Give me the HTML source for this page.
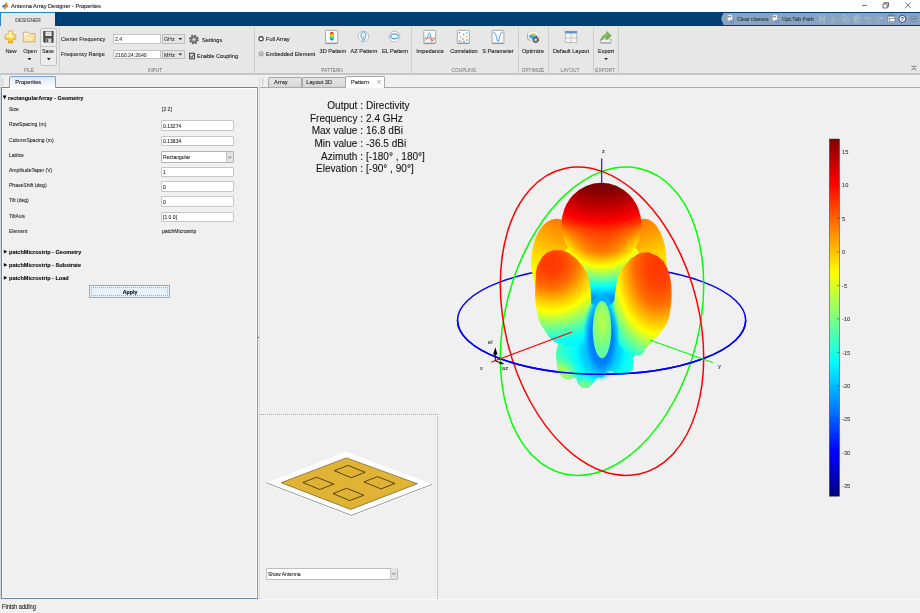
<!DOCTYPE html>
<html lang="en"><head><meta charset="utf-8"><title>Antenna Array Designer - Properties</title>
<style>
*{box-sizing:border-box;margin:0;padding:0}
html,body{width:920px;height:613px;overflow:hidden;background:#f0f0f0}
body{position:relative;font-family:"Liberation Sans",sans-serif;font-size:5.6px;color:#333}
.t{position:absolute;white-space:nowrap;line-height:10px;height:10px;-webkit-text-stroke:0.08px currentColor}
.t.g{will-change:transform}
.t.c{text-align:center}
.t.r{text-align:right}
.b{position:absolute}
svg{position:absolute;left:0;top:0;overflow:visible}
#app{position:absolute;left:0;top:0;width:920px;height:613px;overflow:hidden;background:#f0f0f0;will-change:transform;}
</style></head>
<body>
<div id="app">
<div class="b" style="left:0px;top:0px;width:920px;height:12px;background:#fff"></div>
<div class="t " style="left:11.1px;top:1px;font-size:6.22px;color:#111;transform:scaleX(0.9);transform-origin:0 50%;">Antenna Array Designer - Properties</div>
<div class="b" style="left:0px;top:11.7px;width:920px;height:14.3px;background:#003f73"></div>
<div class="b" style="left:0px;top:11.7px;width:54.6px;height:14.3px;background:#e7e7e7;border-top:1.3px solid #2a86c8;border-left:1px solid #2a86c8"></div>
<div class="t c" style="left:-72.40px;width:200px;top:15px;font-size:5.39px;color:#444;transform:scaleX(0.9);transform-origin:50% 50%;">DESIGNER</div>
<div class="b" style="left:721px;top:12.7px;width:199px;height:12.2px;background:#88a4c2;clip-path:polygon(2.6px 0,100% 0,100% 100%,2.6px 100%,0 50%)"></div>
<div class="t " style="left:736.5px;top:14px;font-size:5.89px;color:#24364a;transform:scaleX(0.9);transform-origin:0 50%;">Clear classes</div>
<div class="t " style="left:781.8px;top:14px;font-size:6.06px;color:#24364a;transform:scaleX(0.9);transform-origin:0 50%;">Opt.Tab Path</div>
<div class="b" style="left:0px;top:26px;width:920px;height:48px;background:#e7e7e7"></div>
<div class="b" style="left:0px;top:73.4px;width:920px;height:1.4px;background:#c6c6c6"></div>
<div class="b" style="left:0px;top:75px;width:0.8px;height:524px;background:#d3dbe5"></div>
<div class="b" style="left:59px;top:27px;width:0.6px;height:46px;background:#cfcfcf"></div>
<div class="b" style="left:253.5px;top:27px;width:0.6px;height:46px;background:#cfcfcf"></div>
<div class="b" style="left:411px;top:27px;width:0.6px;height:46px;background:#cfcfcf"></div>
<div class="b" style="left:517.5px;top:27px;width:0.6px;height:46px;background:#cfcfcf"></div>
<div class="b" style="left:548px;top:27px;width:0.6px;height:46px;background:#cfcfcf"></div>
<div class="b" style="left:593px;top:27px;width:0.6px;height:46px;background:#cfcfcf"></div>
<div class="b" style="left:617.5px;top:27px;width:0.6px;height:46px;background:#cfcfcf"></div>
<div class="t c" style="left:-71.50px;width:200px;top:65px;font-size:5.33px;color:#707070;-webkit-text-stroke:0;transform:scaleX(0.9);transform-origin:50% 50%;">FILE</div>
<div class="t c" style="left:55.00px;width:200px;top:65px;font-size:5.33px;color:#707070;-webkit-text-stroke:0;transform:scaleX(0.9);transform-origin:50% 50%;">INPUT</div>
<div class="t c" style="left:231.50px;width:200px;top:65px;font-size:5.33px;color:#707070;-webkit-text-stroke:0;transform:scaleX(0.9);transform-origin:50% 50%;">PATTERN</div>
<div class="t c" style="left:364.00px;width:200px;top:65px;font-size:5.33px;color:#707070;-webkit-text-stroke:0;transform:scaleX(0.9);transform-origin:50% 50%;">COUPLING</div>
<div class="t c" style="left:432.50px;width:200px;top:65px;font-size:5.33px;color:#707070;-webkit-text-stroke:0;transform:scaleX(0.9);transform-origin:50% 50%;">OPTIMIZE</div>
<div class="t c" style="left:470.00px;width:200px;top:65px;font-size:5.33px;color:#707070;-webkit-text-stroke:0;transform:scaleX(0.9);transform-origin:50% 50%;">LAYOUT</div>
<div class="t c" style="left:505.00px;width:200px;top:65px;font-size:5.33px;color:#707070;-webkit-text-stroke:0;transform:scaleX(0.9);transform-origin:50% 50%;">EXPORT</div>
<div class="t c" style="left:-89.50px;width:200px;top:46px;font-size:6.22px;color:#111;transform:scaleX(0.9);transform-origin:50% 50%;">New</div>
<div class="t c" style="left:-70.50px;width:200px;top:46px;font-size:6.22px;color:#111;transform:scaleX(0.9);transform-origin:50% 50%;">Open</div>
<div class="b" style="left:40px;top:27.5px;width:17px;height:38px;border:1px solid #c2c2c2;border-radius:2px;background:#ececec"></div>
<div class="b" style="left:40.5px;top:46px;width:16px;height:0.6px;background:#c8c8c8"></div>
<div class="t c" style="left:-51.75px;width:200px;top:46px;font-size:5.89px;color:#111;transform:scaleX(0.9);transform-origin:50% 50%;">Save</div>
<div class="t " style="left:61.2px;top:34px;font-size:6.17px;color:#222;transform:scaleX(0.9);transform-origin:0 50%;">Center Frequency</div>
<div class="t " style="left:61.2px;top:49px;font-size:6.11px;color:#222;transform:scaleX(0.9);transform-origin:0 50%;">Frequency Range</div>
<div class="b" style="left:113px;top:34.2px;width:47.5px;height:9.6px;background:#fff;border:1px solid #c4c4c4"></div>
<div class="b" style="left:162px;top:34.2px;width:23px;height:9.6px;background:#e4e4e4;border:1px solid #bcbcbc"></div>
<div class="b" style="left:113px;top:49.7px;width:47.5px;height:9.6px;background:#fff;border:1px solid #c4c4c4"></div>
<div class="b" style="left:162px;top:49.7px;width:23px;height:9.6px;background:#e4e4e4;border:1px solid #bcbcbc"></div>
<div class="t " style="left:114.5px;top:34px;font-size:5.78px;color:#333;transform:scaleX(0.9);transform-origin:0 50%;">2.4</div>
<div class="t " style="left:114.5px;top:50px;font-size:5.78px;color:#333;transform:scaleX(0.9);transform-origin:0 50%;">2160:24:2640</div>
<div class="t " style="left:164px;top:34px;font-size:5.89px;color:#333;transform:scaleX(0.9);transform-origin:0 50%;">GHz</div>
<div class="t " style="left:164px;top:50px;font-size:5.89px;color:#333;transform:scaleX(0.9);transform-origin:0 50%;">MHz</div>
<div class="t " style="left:202px;top:35px;font-size:6.22px;color:#111;transform:scaleX(0.9);transform-origin:0 50%;">Settings</div>
<div class="t " style="left:197px;top:51px;font-size:6.22px;color:#111;transform:scaleX(0.9);transform-origin:0 50%;">Enable Coupling</div>
<div class="t " style="left:266px;top:34px;font-size:6.22px;color:#111;transform:scaleX(0.9);transform-origin:0 50%;">Full Array</div>
<div class="t " style="left:266px;top:49px;font-size:6.22px;color:#111;transform:scaleX(0.9);transform-origin:0 50%;">Embedded Element</div>
<div class="t c" style="left:232.50px;width:200px;top:46px;font-size:6.22px;color:#111;transform:scaleX(0.9);transform-origin:50% 50%;">3D Pattern</div>
<div class="t c" style="left:263.50px;width:200px;top:46px;font-size:6.22px;color:#111;transform:scaleX(0.9);transform-origin:50% 50%;">AZ Pattern</div>
<div class="t c" style="left:295.00px;width:200px;top:46px;font-size:6.22px;color:#111;transform:scaleX(0.9);transform-origin:50% 50%;">EL Pattern</div>
<div class="t c" style="left:330.00px;width:200px;top:46px;font-size:6.22px;color:#111;transform:scaleX(0.9);transform-origin:50% 50%;">Impedance</div>
<div class="t c" style="left:363.50px;width:200px;top:46px;font-size:6.22px;color:#111;transform:scaleX(0.9);transform-origin:50% 50%;">Correlation</div>
<div class="t c" style="left:398.00px;width:200px;top:46px;font-size:6.22px;color:#111;transform:scaleX(0.9);transform-origin:50% 50%;">S Parameter</div>
<div class="t c" style="left:433.00px;width:200px;top:46px;font-size:6.22px;color:#111;transform:scaleX(0.9);transform-origin:50% 50%;">Optimize</div>
<div class="t c" style="left:471.00px;width:200px;top:46px;font-size:6.22px;color:#111;transform:scaleX(0.9);transform-origin:50% 50%;">Default Layout</div>
<div class="t c" style="left:505.50px;width:200px;top:46px;font-size:6.22px;color:#111;transform:scaleX(0.9);transform-origin:50% 50%;">Export</div>
<div class="b" style="left:0.9px;top:87.1px;width:257px;height:511.9px;border:1.2px solid #6487ae;border-right:1.8px solid #7b9cc0;background:#f0f0f0;box-shadow:inset 0 0 0 0.9px #fdfdfd"></div>
<div class="b" style="left:9.2px;top:76.3px;width:46.8px;height:11.9px;border:0.9px solid #7da0c8;border-bottom:none;border-radius:2px 2px 0 0;background:linear-gradient(#dbe5f1,#f4f8fc 60%,#fff)"></div>
<div class="b" style="left:2.4px;top:77.7px;width:0.6px;height:8px;background:#d4d4d4"></div>
<div class="b" style="left:3.4px;top:77.7px;width:0.5px;height:8px;background:#e4e4e4"></div>
<div class="t c" style="left:-71.80px;width:200px;top:77px;font-size:5.70px;color:#111;">Properties</div>
<div class="b" style="left:259.2px;top:76px;width:0.7px;height:523px;background:#dcdcdc"></div>
<div class="b" style="left:259.2px;top:598.9px;width:661px;height:0.7px;background:#fafafa"></div>
<div class="b" style="left:259.5px;top:86.9px;width:660.5px;height:0.8px;background:#a9a9a9"></div>
<div class="b" style="left:262.2px;top:77.7px;width:0.6px;height:8px;background:#cfcfcf"></div>
<div class="b" style="left:263.3px;top:77.7px;width:0.5px;height:8px;background:#e2e2e2"></div>
<div class="b" style="left:268px;top:76.8px;width:34.4px;height:10.2px;border:0.8px solid #a6a6a6;border-bottom:none;border-radius:2px 2px 0 0;background:linear-gradient(#e6e6e6,#d6d6d6)"></div>
<div class="b" style="left:302.2px;top:76.8px;width:43.4px;height:10.2px;border:0.8px solid #a6a6a6;border-bottom:none;border-radius:2px 2px 0 0;background:linear-gradient(#e6e6e6,#d6d6d6)"></div>
<div class="b" style="left:345.4px;top:76.4px;width:39.2px;height:11.4px;border:0.8px solid #a6a6a6;border-bottom:none;border-radius:2px 2px 0 0;background:#fff"></div>
<div class="t " style="left:274.1px;top:77px;font-size:5.70px;color:#222;">Array</div>
<div class="t " style="left:306.3px;top:77px;font-size:5.65px;color:#222;">Layout 3D</div>
<div class="t " style="left:351.1px;top:77px;font-size:5.55px;color:#111;">Pattern</div>
<div class="b" style="left:258.2px;top:337px;width:1px;height:1px;background:#111;border-radius:50%"></div>
<div class="t " style="left:8.1px;top:93px;font-size:6.17px;color:#000;font-weight:bold;transform:scaleX(0.9);transform-origin:0 50%;">rectangularArray - Geometry</div>
<div class="t " style="left:9.1px;top:104px;font-size:5.61px;color:#222;transform:scaleX(0.9);transform-origin:0 50%;">Size</div>
<div class="t " style="left:9.1px;top:119px;font-size:5.61px;color:#222;transform:scaleX(0.9);transform-origin:0 50%;">RowSpacing (m)</div>
<div class="t " style="left:9.1px;top:135px;font-size:5.61px;color:#222;transform:scaleX(0.9);transform-origin:0 50%;">ColumnSpacing (m)</div>
<div class="t " style="left:9.1px;top:150px;font-size:5.61px;color:#222;transform:scaleX(0.9);transform-origin:0 50%;">Lattice</div>
<div class="t " style="left:9.1px;top:165px;font-size:5.61px;color:#222;transform:scaleX(0.9);transform-origin:0 50%;">AmplitudeTaper (V)</div>
<div class="t " style="left:9.1px;top:180px;font-size:5.61px;color:#222;transform:scaleX(0.9);transform-origin:0 50%;">PhaseShift (deg)</div>
<div class="t " style="left:9.1px;top:195px;font-size:5.61px;color:#222;transform:scaleX(0.9);transform-origin:0 50%;">Tilt (deg)</div>
<div class="t " style="left:9.1px;top:211px;font-size:5.61px;color:#222;transform:scaleX(0.9);transform-origin:0 50%;">TiltAxis</div>
<div class="t " style="left:9.1px;top:226px;font-size:5.61px;color:#222;transform:scaleX(0.9);transform-origin:0 50%;">Element</div>
<div class="t " style="left:162px;top:104px;font-size:5.61px;color:#222;transform:scaleX(0.9);transform-origin:0 50%;">[2 2]</div>
<div class="t " style="left:162px;top:226px;font-size:5.61px;color:#222;transform:scaleX(0.9);transform-origin:0 50%;">patchMicrostrip</div>
<div class="b" style="left:161px;top:120.15px;width:72.6px;height:10.6px;background:#fff;border:0.8px solid #c6c6c6;border-radius:1px"></div>
<div class="t " style="left:162.6px;top:121px;font-size:5.61px;color:#222;transform:scaleX(0.9);transform-origin:0 50%;">0.13274</div>
<div class="b" style="left:161px;top:135.75px;width:72.6px;height:10.6px;background:#fff;border:0.8px solid #c6c6c6;border-radius:1px"></div>
<div class="t " style="left:162.6px;top:136px;font-size:5.61px;color:#222;transform:scaleX(0.9);transform-origin:0 50%;">0.13834</div>
<div class="b" style="left:161px;top:166.54999999999998px;width:72.6px;height:10.6px;background:#fff;border:0.8px solid #c6c6c6;border-radius:1px"></div>
<div class="t " style="left:162.6px;top:167px;font-size:5.61px;color:#222;transform:scaleX(0.9);transform-origin:0 50%;">1</div>
<div class="b" style="left:161px;top:181.25px;width:72.6px;height:10.6px;background:#fff;border:0.8px solid #c6c6c6;border-radius:1px"></div>
<div class="t " style="left:162.6px;top:182px;font-size:5.61px;color:#222;transform:scaleX(0.9);transform-origin:0 50%;">0</div>
<div class="b" style="left:161px;top:196.25px;width:72.6px;height:10.6px;background:#fff;border:0.8px solid #c6c6c6;border-radius:1px"></div>
<div class="t " style="left:162.6px;top:197px;font-size:5.61px;color:#222;transform:scaleX(0.9);transform-origin:0 50%;">0</div>
<div class="b" style="left:161px;top:211.7px;width:72.6px;height:10.6px;background:#fff;border:0.8px solid #c6c6c6;border-radius:1px"></div>
<div class="t " style="left:162.6px;top:212px;font-size:5.61px;color:#222;transform:scaleX(0.9);transform-origin:0 50%;">[1 0 0]</div>
<div class="b" style="left:161px;top:151.4px;width:72.6px;height:11.4px;background:#fff;border:0.8px solid #b4b4b4;border-radius:1px"></div>
<div class="b" style="left:226px;top:152.1px;width:7px;height:10px;background:#e3e3e3;border-left:0.6px solid #c4c4c4"></div>
<div class="t " style="left:163px;top:152px;font-size:5.61px;color:#222;transform:scaleX(0.9);transform-origin:0 50%;">Rectangular</div>
<div class="t " style="left:9.2px;top:247px;font-size:6.17px;color:#000;font-weight:bold;transform:scaleX(0.9);transform-origin:0 50%;">patchMicrostrip - Geometry</div>
<div class="t " style="left:9.2px;top:260px;font-size:6.17px;color:#000;font-weight:bold;transform:scaleX(0.9);transform-origin:0 50%;">patchMicrostrip - Substrate</div>
<div class="t " style="left:9.2px;top:273px;font-size:6.17px;color:#000;font-weight:bold;transform:scaleX(0.9);transform-origin:0 50%;">patchMicrostrip - Load</div>
<div class="b" style="left:89.2px;top:285.4px;width:80.8px;height:12.2px;border:1.2px solid #7fb2e0;background:#e5f1fb"></div>
<div class="b" style="left:91.2px;top:287.3px;width:76.8px;height:8.4px;border:0.5px dotted #aaa"></div>
<div class="t c" style="left:29.50px;width:200px;top:287px;font-size:5.89px;color:#000;font-weight:bold;transform:scaleX(0.9);transform-origin:50% 50%;">Apply</div>
<div class="t r g" style="left:163.10px;width:200px;top:101px;font-size:10.05px;color:#111;">Output :</div>
<div class="t g" style="left:366.1px;top:101px;font-size:10.05px;color:#111;">Directivity</div>
<div class="t r g" style="left:163.10px;width:200px;top:114px;font-size:10.05px;color:#111;">Frequency :</div>
<div class="t g" style="left:366.1px;top:114px;font-size:10.05px;color:#111;">2.4 GHz</div>
<div class="t r g" style="left:163.10px;width:200px;top:126px;font-size:10.05px;color:#111;">Max value :</div>
<div class="t g" style="left:366.1px;top:126px;font-size:10.05px;color:#111;">16.8 dBi</div>
<div class="t r g" style="left:163.10px;width:200px;top:139px;font-size:10.05px;color:#111;">Min value :</div>
<div class="t g" style="left:366.1px;top:139px;font-size:10.05px;color:#111;">-36.5 dBi</div>
<div class="t r g" style="left:163.10px;width:200px;top:152px;font-size:10.05px;color:#111;">Azimuth :</div>
<div class="t g" style="left:366.1px;top:152px;font-size:10.05px;color:#111;">[-180° , 180°]</div>
<div class="t r g" style="left:163.10px;width:200px;top:164px;font-size:10.05px;color:#111;">Elevation :</div>
<div class="t g" style="left:366.1px;top:164px;font-size:10.05px;color:#111;">[-90° , 90°]</div>
<div class="t g" style="left:601.9px;top:146px;font-size:5.70px;color:#333;">z</div>
<div class="t g" style="left:480px;top:363px;font-size:5.70px;color:#333;">x</div>
<div class="t g" style="left:717.8px;top:361px;font-size:5.70px;color:#333;">y</div>
<div class="t g" style="left:488.3px;top:337px;font-size:5.70px;color:#333;">el</div>
<div class="t g" style="left:502px;top:363px;font-size:5.70px;color:#333;">az</div>
<div class="b" style="left:260px;top:413.8px;width:178.2px;height:185px;border-top:0.8px dotted #a8a8a8;border-right:0.8px dotted #a8a8a8"></div>
<div class="b" style="left:266.4px;top:567.6px;width:131.3px;height:12.1px;background:#fff;border:0.8px solid #bdbdbd;border-radius:1px"></div>
<div class="b" style="left:390.2px;top:568.3px;width:6.8px;height:10.7px;background:#e3e3e3;border-left:0.6px solid #c4c4c4"></div>
<div class="t " style="left:267.8px;top:569px;font-size:5.61px;color:#222;transform:scaleX(0.9);transform-origin:0 50%;">Show Antenna</div>
<div class="t " style="left:1.8px;top:602px;font-size:6.33px;color:#111;transform:scaleX(0.9);transform-origin:0 50%;">Finish adding</div>
<div class="t g" style="left:842.2px;top:147px;font-size:5.70px;color:#3a3a3a;">15</div>
<div class="t g" style="left:842.2px;top:180px;font-size:5.70px;color:#3a3a3a;">10</div>
<div class="t g" style="left:842.2px;top:214px;font-size:5.70px;color:#3a3a3a;">5</div>
<div class="t g" style="left:842.2px;top:247px;font-size:5.70px;color:#3a3a3a;">0</div>
<div class="t g" style="left:842.2px;top:281px;font-size:5.70px;color:#3a3a3a;">-5</div>
<div class="t g" style="left:842.2px;top:314px;font-size:5.70px;color:#3a3a3a;">-10</div>
<div class="t g" style="left:842.2px;top:348px;font-size:5.70px;color:#3a3a3a;">-15</div>
<div class="t g" style="left:842.2px;top:381px;font-size:5.70px;color:#3a3a3a;">-20</div>
<div class="t g" style="left:842.2px;top:414px;font-size:5.70px;color:#3a3a3a;">-25</div>
<div class="t g" style="left:842.2px;top:448px;font-size:5.70px;color:#3a3a3a;">-30</div>
<div class="t g" style="left:842.2px;top:481px;font-size:5.70px;color:#3a3a3a;">-35</div>
<svg width="920" height="613" viewBox="0 0 920 613">
<g fill="none" stroke-width="1.5">
<ellipse cx="601.6" cy="320.3" rx="144.1" ry="54" stroke="#0000ff"/>
<circle r="1" transform="matrix(-101.7 36.6 0 -149.8 602.0 321.2)" stroke="#00ff00" vector-effect="non-scaling-stroke"/>
<circle r="1" transform="matrix(101.7 36.6 0 -149.8 602.0 321.2)" stroke="#ff0000" vector-effect="non-scaling-stroke"/>
</g>
<defs><radialGradient id="gBody" gradientUnits="userSpaceOnUse" cx="0" cy="0" r="60" gradientTransform="translate(601 352) rotate(0) scale(0.8 1)"><stop offset="0.000" stop-color="#008aff"/><stop offset="0.267" stop-color="#00a8ff"/><stop offset="0.500" stop-color="#00faff"/><stop offset="0.750" stop-color="#24ffdb"/><stop offset="1.000" stop-color="#57ffa8"/></radialGradient><radialGradient id="gP1" gradientUnits="userSpaceOnUse" cx="0" cy="0" r="22" gradientTransform="translate(559 376) rotate(0) scale(1 1)"><stop offset="0.000" stop-color="#b3ff4c"/><stop offset="0.455" stop-color="#94ff6b"/><stop offset="1.000" stop-color="#4dffb2" stop-opacity="0"/></radialGradient><radialGradient id="gP2" gradientUnits="userSpaceOnUse" cx="0" cy="0" r="16" gradientTransform="translate(584 390) rotate(0) scale(1 1)"><stop offset="0.000" stop-color="#80ff80"/><stop offset="0.500" stop-color="#61ff9e"/><stop offset="1.000" stop-color="#2effd1" stop-opacity="0"/></radialGradient><clipPath id="cBody"><path d="M585.0 290.0C567.0 301.7 575.1 306.7 566.0 325.0C556.9 343.3 560.9 332.7 557.8 345.0C554.7 357.3 556.1 352.3 556.8 362.0C557.5 371.7 556.5 368.3 560.0 374.0C563.5 379.7 562.4 377.7 567.4 379.0C572.4 380.3 571.3 376.3 575.0 378.0C578.7 379.7 575.2 380.7 578.5 384.0C581.8 387.3 580.5 387.8 585.0 388.0C589.5 388.2 587.9 387.8 592.0 384.5C596.1 381.2 593.9 380.3 597.4 378.0C600.9 375.7 599.1 379.8 602.6 377.5C606.1 375.2 602.7 372.3 607.8 371.0C612.9 369.7 610.6 373.2 618.0 373.5C625.4 373.8 624.8 375.2 630.0 372.0C635.2 368.8 632.0 369.3 633.5 364.0C635.0 358.7 630.3 362.0 634.5 356.0C638.7 350.0 643.5 358.0 646.0 346.0C648.5 334.0 650.7 338.7 642.0 320.0C633.3 301.3 639.0 300.0 620.0 290.0C601.0 280.0 603.0 278.3 585.0 290.0Z"/></clipPath><radialGradient id="gBL" gradientUnits="userSpaceOnUse" cx="0" cy="0" r="110" gradientTransform="translate(578 180) rotate(0) scale(1 1)"><stop offset="0.000" stop-color="#ff4c00"/><stop offset="0.364" stop-color="#ff7000"/><stop offset="0.545" stop-color="#ff9e00"/><stop offset="0.727" stop-color="#ffd100"/><stop offset="0.909" stop-color="#fffa00"/><stop offset="1.000" stop-color="#f0ff0f"/></radialGradient><radialGradient id="gBR" gradientUnits="userSpaceOnUse" cx="0" cy="0" r="110" gradientTransform="translate(625 180) rotate(0) scale(1 1)"><stop offset="0.000" stop-color="#ff4c00"/><stop offset="0.364" stop-color="#ff7000"/><stop offset="0.545" stop-color="#ff9e00"/><stop offset="0.727" stop-color="#ffd100"/><stop offset="0.909" stop-color="#fffa00"/><stop offset="1.000" stop-color="#f0ff0f"/></radialGradient><radialGradient id="gMain" gradientUnits="userSpaceOnUse" cx="0" cy="0" r="170" gradientTransform="translate(601.5 140) rotate(0) scale(1 1)"><stop offset="0.000" stop-color="#800000"/><stop offset="0.294" stop-color="#800000"/><stop offset="0.376" stop-color="#b30000"/><stop offset="0.482" stop-color="#ff0000"/><stop offset="0.594" stop-color="#ff8000"/><stop offset="0.694" stop-color="#ffff00"/><stop offset="0.794" stop-color="#80ff80"/><stop offset="0.859" stop-color="#00ffff"/><stop offset="0.929" stop-color="#0094ff"/><stop offset="1.000" stop-color="#0080ff"/></radialGradient><radialGradient id="gLow" gradientUnits="userSpaceOnUse" cx="0" cy="0" r="90" gradientTransform="translate(601.4 222) rotate(0) scale(1 1)"><stop offset="0.000" stop-color="#ff0000"/><stop offset="0.222" stop-color="#ff4200"/><stop offset="0.356" stop-color="#ff8a00"/><stop offset="0.489" stop-color="#ffff00"/><stop offset="0.611" stop-color="#80ff80"/><stop offset="0.722" stop-color="#00ffff"/><stop offset="0.844" stop-color="#0094ff"/><stop offset="1.000" stop-color="#0080ff"/></radialGradient><linearGradient id="lgFade" gradientUnits="userSpaceOnUse" x1="0" y1="224" x2="0" y2="250"><stop offset="0" stop-color="#000"/><stop offset="1" stop-color="#fff"/></linearGradient><mask id="mLow" maskUnits="userSpaceOnUse" x="540" y="220" width="124" height="95"><rect x="540" y="220" width="124" height="95" fill="url(#lgFade)"/></mask><radialGradient id="gFL" gradientUnits="userSpaceOnUse" cx="0" cy="0" r="90" gradientTransform="translate(551 263) rotate(0) scale(1 1)"><stop offset="0.000" stop-color="#ff3800"/><stop offset="0.133" stop-color="#ff4200"/><stop offset="0.278" stop-color="#ff7000"/><stop offset="0.411" stop-color="#ffbd00"/><stop offset="0.533" stop-color="#ffff00"/><stop offset="0.700" stop-color="#80ff80"/><stop offset="0.867" stop-color="#0afff5"/><stop offset="1.000" stop-color="#00f0ff"/></radialGradient><radialGradient id="gFR" gradientUnits="userSpaceOnUse" cx="0" cy="0" r="64" gradientTransform="translate(658 267) rotate(0) scale(1 1.6)"><stop offset="0.000" stop-color="#ff3800"/><stop offset="0.188" stop-color="#ff4200"/><stop offset="0.375" stop-color="#ff7000"/><stop offset="0.531" stop-color="#ffbd00"/><stop offset="0.656" stop-color="#ffff00"/><stop offset="0.812" stop-color="#80ff80"/><stop offset="0.953" stop-color="#1affe5"/><stop offset="1.000" stop-color="#05fffa"/></radialGradient><radialGradient id="gHalo" gradientUnits="userSpaceOnUse" cx="0" cy="0" r="1" gradientTransform="translate(0 0) rotate(0) scale(1 1)"><stop offset="0.000" stop-color="#0075ff"/><stop offset="0.600" stop-color="#0080ff"/><stop offset="0.820" stop-color="#00bdff" stop-opacity="0.8"/><stop offset="1.000" stop-color="#00faff" stop-opacity="0"/></radialGradient><radialGradient id="gC" gradientUnits="userSpaceOnUse" cx="0" cy="0" r="30" gradientTransform="translate(602 322) rotate(0) scale(0.4 1)"><stop offset="0.000" stop-color="#bdff42"/><stop offset="0.400" stop-color="#9eff61"/><stop offset="1.000" stop-color="#61ff9e"/></radialGradient></defs>
<g id="pattern3d"><path d="M585.0 290.0C567.0 301.7 575.1 306.7 566.0 325.0C556.9 343.3 560.9 332.7 557.8 345.0C554.7 357.3 556.1 352.3 556.8 362.0C557.5 371.7 556.5 368.3 560.0 374.0C563.5 379.7 562.4 377.7 567.4 379.0C572.4 380.3 571.3 376.3 575.0 378.0C578.7 379.7 575.2 380.7 578.5 384.0C581.8 387.3 580.5 387.8 585.0 388.0C589.5 388.2 587.9 387.8 592.0 384.5C596.1 381.2 593.9 380.3 597.4 378.0C600.9 375.7 599.1 379.8 602.6 377.5C606.1 375.2 602.7 372.3 607.8 371.0C612.9 369.7 610.6 373.2 618.0 373.5C625.4 373.8 624.8 375.2 630.0 372.0C635.2 368.8 632.0 369.3 633.5 364.0C635.0 358.7 630.3 362.0 634.5 356.0C638.7 350.0 643.5 358.0 646.0 346.0C648.5 334.0 650.7 338.7 642.0 320.0C633.3 301.3 639.0 300.0 620.0 290.0C601.0 280.0 603.0 278.3 585.0 290.0Z" fill="url(#gBody)"/>
<g clip-path="url(#cBody)"><circle cx="559" cy="376" r="22" fill="url(#gP1)"/><circle cx="584" cy="390" r="16" fill="url(#gP2)"/></g>
<ellipse cx="556.5" cy="262" rx="25.3" ry="43.3" fill="url(#gBL)"/>
<ellipse cx="644.3" cy="262" rx="22.2" ry="43.3" fill="url(#gBR)"/>
<path d="M566.0 250.0C557.2 261.7 569.0 258.3 575.0 270.0C581.0 281.7 579.3 275.0 584.0 285.0C588.7 295.0 583.2 293.0 589.0 300.0C594.8 307.0 592.8 306.0 601.5 306.0C610.2 306.0 608.8 307.0 615.0 300.0C621.2 293.0 615.7 295.0 620.0 285.0C624.3 275.0 622.3 281.7 628.0 270.0C633.7 258.3 645.8 261.7 637.0 250.0C628.2 238.3 625.2 235.0 601.5 235.0C577.8 235.0 574.8 238.3 566.0 250.0Z" fill="url(#gMain)"/>
<ellipse cx="601.4" cy="224.7" rx="40" ry="42" fill="url(#gMain)"/>
<g mask="url(#mLow)"><ellipse cx="601.4" cy="224.7" rx="40" ry="42" fill="url(#gLow)"/><path d="M566.0 250.0C557.2 261.7 569.0 258.3 575.0 270.0C581.0 281.7 579.3 275.0 584.0 285.0C588.7 295.0 583.2 293.0 589.0 300.0C594.8 307.0 592.8 306.0 601.5 306.0C610.2 306.0 608.8 307.0 615.0 300.0C621.2 293.0 615.7 295.0 620.0 285.0C624.3 275.0 622.3 281.7 628.0 270.0C633.7 258.3 645.8 261.7 637.0 250.0C628.2 238.3 625.2 235.0 601.5 235.0C577.8 235.0 574.8 238.3 566.0 250.0Z" fill="url(#gLow)"/></g>
<path d="M535.7 279.4C536.1 272.6 535.1 275.5 536.4 269.6C537.7 263.7 536.9 266.6 539.6 261.7C542.3 256.8 540.9 258.3 544.5 254.9C548.1 251.5 546.1 253.0 550.3 251.5C554.5 250.0 552.3 250.3 557.2 250.3C562.1 250.3 559.8 249.6 565.0 251.5C570.2 253.4 567.9 252.2 572.8 255.9C577.7 259.6 575.8 258.1 579.7 262.7C583.6 267.3 582.0 265.4 584.6 269.6C587.2 273.8 586.0 270.9 587.6 275.4C589.2 279.9 588.3 277.5 589.4 283.0C590.5 288.5 590.2 284.7 590.8 292.0C591.4 299.3 591.3 295.7 591.2 305.0C591.1 314.3 592.2 309.7 590.5 320.0C588.8 330.3 590.8 327.3 586.0 336.0C581.2 344.7 584.7 343.5 576.0 346.0C567.3 348.5 567.9 345.5 560.0 343.5C552.1 341.5 557.5 344.5 552.3 340.0C547.1 335.5 548.9 336.7 544.5 330.0C540.1 323.3 541.6 326.7 539.0 320.0C536.4 313.3 538.0 316.7 536.8 310.0C535.6 303.3 535.9 306.7 535.4 300.0C534.9 293.3 535.1 296.9 535.2 290.0C535.3 283.1 535.3 286.2 535.7 279.4Z" fill="url(#gFL)"/>
<path d="M643.9 252.6C637.4 253.4 639.6 253.4 634.1 256.8C628.6 260.2 631.2 258.8 627.3 262.7C623.4 266.6 625.0 265.0 622.4 268.6C619.8 272.2 621.1 270.0 619.5 273.5C617.9 277.0 618.8 274.2 617.6 279.0C616.4 283.8 617.0 281.0 616.0 288.0C615.0 295.0 615.2 291.0 614.5 300.0C613.8 309.0 613.8 305.0 613.8 315.0C613.8 325.0 612.4 320.0 614.5 330.0C616.6 340.0 612.8 336.5 620.0 345.0C627.2 353.5 627.0 354.8 636.0 355.5C645.0 356.2 641.0 352.2 646.9 347.0C652.8 341.8 648.5 345.7 653.7 340.0C658.9 334.3 657.7 336.7 662.5 330.0C667.3 323.3 665.4 326.7 668.0 320.0C670.6 313.3 669.2 316.4 670.3 310.0C671.4 303.6 670.9 307.9 671.3 300.9C671.7 293.9 671.7 296.5 671.4 289.0C671.1 281.5 671.3 284.2 670.3 278.4C669.3 272.6 670.0 276.1 668.4 271.5C666.8 266.9 668.0 268.9 665.4 264.7C662.8 260.5 664.5 262.2 660.6 258.8C656.7 255.4 659.3 256.5 653.7 254.4C648.1 252.3 650.4 251.8 643.9 252.6Z" fill="url(#gFR)"/>
<ellipse cx="0" cy="0" rx="1" ry="1" transform="translate(601.5 338) scale(19 44)" fill="url(#gHalo)"/>
<ellipse cx="602" cy="329.6" rx="9.3" ry="28.6" fill="url(#gC)"/></g>
<g fill="none" stroke-width="1.5">
<path d="M457.5 320.3A144.1 54 0 0 0 745.7 320.3" stroke="#0000ff"/>
<path d="M601.7 158.6V185.6" stroke="#0000ff" stroke-width="1.1"/>
<path d="M572 332L491 362.3" stroke="#ff0000" stroke-width="1.1"/>
<path d="M650 340L712.8 362.4" stroke="#00ff00" stroke-width="1.1"/>
<path d="M495.3 361V353M495.5 361L501 363" stroke="#000" stroke-width="1"/>
<path d="M493.1 354.6L495.3 347.3L497.5 354.6Z M499.3 364.1L504.6 364.2L500.4 361.4Z" fill="#000" stroke="none"/>
</g>
<path d="M266.4 482.7L346.4 451.7L432 484.3V485.8L351.3 516.8L266.4 484.2Z" fill="#fff"/>
<path d="M266.4 482.9L351.3 515.4L432 484.4" fill="none" stroke="#555" stroke-width="0.6"/>
<path d="M281.1 482.7L346.4 457.9L417.3 483.7L350.7 509.5Z" fill="#e1b335" stroke="#5a4510" stroke-width="0.6"/>
<path d="M334.3 470.7L348.0 465.4L365.1 472.3L351.2 477.7Z" fill="#e1b335" stroke="#1a1405" stroke-width="0.7"/>
<circle cx="349.7" cy="472.20000000000005" r="0.35" fill="#333"/>
<path d="M302.9 482.5L316.6 477.2L333.7 484.1L319.8 489.5Z" fill="#e1b335" stroke="#1a1405" stroke-width="0.7"/>
<circle cx="318.3" cy="484.0" r="0.35" fill="#333"/>
<path d="M364.0 481.9L377.7 476.6L394.8 483.5L380.9 488.9Z" fill="#e1b335" stroke="#1a1405" stroke-width="0.7"/>
<circle cx="379.4" cy="483.40000000000003" r="0.35" fill="#333"/>
<path d="M333.0 493.6L346.7 488.3L363.8 495.2L349.9 500.6Z" fill="#e1b335" stroke="#1a1405" stroke-width="0.7"/>
<circle cx="348.4" cy="495.1" r="0.35" fill="#333"/>
<defs>
<linearGradient id="gPlus" x1="0" y1="0" x2="0" y2="1"><stop offset="0" stop-color="#fff6b0"/><stop offset="0.55" stop-color="#ffe14a"/><stop offset="1" stop-color="#f2b61c"/></linearGradient>
<linearGradient id="gFold" x1="0" y1="0" x2="1" y2="1"><stop offset="0" stop-color="#fffbe8"/><stop offset="1" stop-color="#f5dc84"/></linearGradient>
<linearGradient id="gRain" x1="0" y1="0" x2="0" y2="1"><stop offset="0" stop-color="#e00000"/><stop offset="0.25" stop-color="#ff9000"/><stop offset="0.45" stop-color="#e8f020"/><stop offset="0.6" stop-color="#40e060"/><stop offset="0.8" stop-color="#10c0f0"/><stop offset="1" stop-color="#1030e0"/></linearGradient>
<linearGradient id="gBox" x1="0" y1="0" x2="0" y2="1"><stop offset="0" stop-color="#ffffff"/><stop offset="1" stop-color="#f4f4f4"/></linearGradient>
<linearGradient id="gGreen" x1="0" y1="0" x2="1" y2="1"><stop offset="0" stop-color="#b8e86a"/><stop offset="1" stop-color="#3f9e2a"/></linearGradient>
</defs>
<path d="M1.2 6.6L4 4.9L5.2 6.1L3.4 7.6Z" fill="#3a8fd0"/>
<path d="M3.4 7.6L5.2 6.1L6.3 2.2L4.9 4.4L4 4.9Z" fill="#27527c"/>
<path d="M3.9 8.1L5.2 6.1L6.3 2.1C7 3.5 7.6 5.8 8.5 7.3L7.3 6.8L6 7.9L4.6 9.3Z" fill="#e8401c"/>
<path d="M5.4 5.8L6.3 2.1C6.8 3.2 7 4.5 7.2 6.2L6.2 7.5L4.6 9.3L4.1 8.3Z" fill="#ff9a10" opacity="0.85"/>
<path d="M862 5.4H867" stroke="#333" stroke-width="0.7" fill="none"/>
<path d="M883 3.9H887.2V8H883ZM884.4 3.9V2.6H888.5V6.7H887.2" stroke="#333" stroke-width="0.7" fill="none"/>
<path d="M905.3 2.6L910.8 8M910.8 2.6L905.3 8" stroke="#333" stroke-width="0.7" fill="none"/>
<path d="M8.3 31H12.7V34.8H15.9V39.2H12.7V43H8.3V39.2H5.1V34.8H8.3Z" fill="url(#gPlus)" stroke="#c99a3c" stroke-width="0.7" stroke-linejoin="round"/>
<path d="M9.4 32.2V35.9H6.3M9.4 35.9H11.6V38" stroke="#fffdf0" stroke-width="1.1" fill="none" opacity="0.95"/>
<path d="M23.3 32.2H28.2L29.6 33.6H35V41.9H23.3Z" fill="url(#gFold)" stroke="#c2935c" stroke-width="0.7" stroke-linejoin="round"/>
<path d="M24.2 41.4L26 36H34.4" stroke="#e6c878" stroke-width="0.6" fill="none"/>
<path d="M43.2 31H53.6V42.8H44.4L43.2 41.6Z" fill="#4a4a4a"/>
<rect x="45.4" y="31.6" width="6.2" height="4.4" fill="#f4f4f4"/>
<path d="M46.4 33H50.6M46.4 34.4H50.6" stroke="#9a9a9a" stroke-width="0.5"/>
<rect x="45.8" y="38.4" width="5.6" height="4.4" fill="#d8d8d8"/>
<rect x="46.6" y="39" width="1.6" height="3.2" fill="#4a4a4a"/>
<path d="M27.5 58.1H31.299999999999997L29.4 60.2Z" fill="#1a1a1a"/>
<path d="M46.9 58.1H50.699999999999996L48.8 60.2Z" fill="#1a1a1a"/>
<path d="M604.2 57.9H608.0L606.1 60.0Z" fill="#1a1a1a"/>
<path d="M178.5 38.1H182.10000000000002L180.3 40.1Z" fill="#1a1a1a"/>
<path d="M178.5 53.6H182.10000000000002L180.3 55.6Z" fill="#1a1a1a"/>
<circle cx="193.9" cy="39.5" r="3.9" fill="none" stroke="#5a5a5a" stroke-width="1.9" stroke-dasharray="1.7 1.36"/>
<circle cx="193.9" cy="39.5" r="3.2" fill="#8a8a8a" stroke="#555" stroke-width="0.7"/>
<circle cx="193.9" cy="39.5" r="1.5" fill="#f0f0f0" stroke="#666" stroke-width="0.4"/>
<rect x="189.6" y="53.2" width="4.8" height="5.6" fill="#e4e4e4" stroke="#3a3a3a" stroke-width="1"/>
<path d="M190.6 56L191.8 57.4L193.8 54.4" stroke="#222" stroke-width="0.9" fill="none"/>
<circle cx="261.1" cy="38.7" r="2.1" fill="#fff" stroke="#3a3a3a" stroke-width="1.1"/>
<circle cx="261.1" cy="53.8" r="2.4" fill="#b0b0b0" stroke="#999" stroke-width="0.5"/>
<circle cx="261.1" cy="53.3" r="1.2" fill="#c8c8c8"/>
<rect x="325.5" y="30.4" width="12.199999999999989" height="13.200000000000003" rx="0.8" fill="url(#gBox)" stroke="#8c8c8c" stroke-width="0.7"/>
<path d="M325.8 43.2H337.4" stroke="#8a8a8a" stroke-width="1"/>
<path d="M331.8 32C333.6 32 334.2 33.6 334 35.4C334.3 37.4 334 39 333.2 39.8C332.6 40.8 331.1 40.8 330.5 39.8C329.6 39 329.4 37.4 329.7 35.4C329.5 33.6 330 32 331.8 32Z" fill="url(#gRain)"/>
<circle cx="363.4" cy="36.6" r="5.3" fill="#fdfdfd" stroke="#a0a0a0" stroke-width="0.7"/>
<path d="M363.4 41C362.4 39.6 360.9 37.2 360.9 35.2C360.9 33.4 362 32.2 363.4 32.2C364.8 32.2 365.9 33.4 365.9 35.2C365.9 37.2 364.4 39.6 363.4 41Z" fill="#eef6fd" stroke="#2f8ad8" stroke-width="0.8"/>
<path d="M363.4 35.5V40.5" stroke="#2f8ad8" stroke-width="0.5"/>
<circle cx="394.6" cy="36.6" r="5.3" fill="#fdfdfd" stroke="#a0a0a0" stroke-width="0.7"/>
<ellipse cx="394.6" cy="36.4" rx="3.9" ry="2.6" fill="#f4f9fe" stroke="#2f8ad8" stroke-width="1"/>
<rect x="423.8" y="30.4" width="11.899999999999977" height="13.200000000000003" rx="0.8" fill="url(#gBox)" stroke="#8c8c8c" stroke-width="0.7"/>
<path d="M424.1 43.2H435.4" stroke="#8a8a8a" stroke-width="1"/>
<path d="M424.3 38.6H435.2" stroke="#e8a060" stroke-width="0.6"/>
<path d="M424.5 40.5C426.5 40 427.5 38 428.3 35C428.9 32.6 429.6 32 430.1 33.6C430.8 36 431.2 39.5 432 40.6C432.8 41.5 434 39.4 435 39" stroke="#3090e0" stroke-width="0.7" fill="none"/>
<path d="M424.5 38.4C426.2 38 427 37 427.9 37.6C428.9 38.2 429.2 36 430 36.4C430.8 37 431 41.6 431.6 41.8C432.3 41.8 432.3 38 433.4 37.6L435 38" stroke="#e05050" stroke-width="0.6" fill="none"/>
<rect x="457.3" y="30.4" width="12.099999999999966" height="13.200000000000003" rx="0.8" fill="url(#gBox)" stroke="#8c8c8c" stroke-width="0.7"/>
<path d="M457.6 43.2H469.09999999999997" stroke="#8a8a8a" stroke-width="1"/>
<circle cx="459.6" cy="32.8" r="0.75" fill="#2a8ae0"/>
<circle cx="463.6" cy="34.4" r="0.75" fill="#2a8ae0"/>
<circle cx="466.8" cy="33" r="0.75" fill="#2a8ae0"/>
<circle cx="460.6" cy="37" r="0.75" fill="#f0a020"/>
<circle cx="463" cy="39" r="0.75" fill="#2a8ae0"/>
<circle cx="466.6" cy="36.6" r="0.75" fill="#f0a020"/>
<circle cx="459.8" cy="41" r="0.75" fill="#2a8ae0"/>
<circle cx="464" cy="41.6" r="0.75" fill="#2a8ae0"/>
<circle cx="467" cy="40" r="0.75" fill="#2a8ae0"/>
<rect x="492" y="30.4" width="11.899999999999977" height="13.200000000000003" rx="0.8" fill="url(#gBox)" stroke="#8c8c8c" stroke-width="0.7"/>
<path d="M492.3 43.2H503.59999999999997" stroke="#8a8a8a" stroke-width="1"/>
<path d="M492.6 32.2C494.6 32.2 495.4 33 496.2 36C497 39.4 497.6 41.4 498 41.4C498.5 41.4 499 39.4 499.8 36C500.6 33 501.4 32.2 503.4 32.2" stroke="#3090e0" stroke-width="0.8" fill="none"/>
<path d="M528 33L533.4 30.9L538.6 33V38.6L533.4 41L528 38.6Z" fill="#fcfcfc" stroke="#c8c8c8" stroke-width="0.5"/>
<path d="M529 36.4C530.6 34 532.6 33 534.4 34C536.2 34.8 537.4 35.8 538 37.2L533.6 39.4L529.6 37.8Z" fill="#30b8e8"/>
<path d="M531.4 34.2C532.4 33 534 32.8 535.2 33.6C536 34.2 536.2 35 535.4 35.4C534 36 532.4 35.6 531.4 34.2Z" fill="#f0d830"/>
<path d="M527.6 33.4V39.2L530.6 40.6" stroke="#777" stroke-width="0.5" fill="none"/>
<circle cx="535.7" cy="39.8" r="2.7" fill="none" stroke="#4a4a4a" stroke-width="1.5" stroke-dasharray="1.2 0.92"/>
<circle cx="535.7" cy="39.8" r="2.3" fill="#8c8c8c" stroke="#4a4a4a" stroke-width="0.6"/>
<circle cx="535.7" cy="39.8" r="1" fill="#e8e8e8"/>
<rect x="565.2" y="31.2" width="11.7" height="11.4" fill="#f4f4f4" stroke="#9a9a9a" stroke-width="0.6"/>
<rect x="565.2" y="31.2" width="11.7" height="2.2" fill="#5a92c8"/>
<path d="M571 33.4V42.6M565.2 38H576.9" stroke="#a8a8a8" stroke-width="0.6"/>
<path d="M600.3 39H611V43.2H600.3Z" fill="#f2f2f2" stroke="#8a8a8a" stroke-width="0.6"/>
<path d="M601 42.6H610.4" stroke="#9a9a9a" stroke-width="0.8"/>
<path d="M601.4 40.4C601.6 36.6 603.6 34.4 606.6 34.2V31.4L611.2 35.6L606.6 39.6V37C604.6 37 603 38 601.4 40.4Z" fill="url(#gGreen)" stroke="#3c8c28" stroke-width="0.5" stroke-linejoin="round"/>
<path d="M911.3 66.4H916.5" stroke="#555" stroke-width="0.7"/>
<path d="M911.6 70.4L913.9 67.8L916.2 70.4" stroke="#555" stroke-width="0.8" fill="none"/>
<rect x="727.2" y="14.6" width="5.2" height="6.2" fill="#f6f6f6" stroke="#7a8aa0" stroke-width="0.4"/>
<path d="M728.2 17.6V15.8L729.4000000000001 17L730.6 15.8V17.6" stroke="#333" stroke-width="0.5" fill="none"/>
<path d="M732.2 19.2L732.8000000000001 20.6L734.3000000000001 20.7L733.2 21.7L733.5 23.2L732.2 22.4L730.9000000000001 23.2L731.2 21.7L730.1 20.7L731.6 20.6Z" fill="#cfe0f8" stroke="#17408c" stroke-width="0.55" transform="translate(732.2 21.3) scale(0.78) translate(-732.2 -21.3)"/>
<rect x="772.2" y="14.6" width="5.2" height="6.2" fill="#f6f6f6" stroke="#7a8aa0" stroke-width="0.4"/>
<path d="M773.2 17.6V15.8L774.4000000000001 17L775.6 15.8V17.6" stroke="#333" stroke-width="0.5" fill="none"/>
<path d="M777.2 19.2L777.8000000000001 20.6L779.3000000000001 20.7L778.2 21.7L778.5 23.2L777.2 22.4L775.9000000000001 23.2L776.2 21.7L775.1 20.7L776.6 20.6Z" fill="#cfe0f8" stroke="#17408c" stroke-width="0.55" transform="translate(777.2 21.3) scale(0.78) translate(-777.2 -21.3)"/>
<rect x="819.3" y="15.3" width="6" height="7" fill="#a9bbd0" opacity="0.9"/><rect x="820.6" y="15.3" width="3.4" height="2.4" fill="#8fa6c2"/><rect x="820.6" y="19.4" width="3.4" height="2.9" fill="#93a9c4"/>
<path d="M834.6 15.6L832.2 21.4M832.4 15.8L834.6 21.2" stroke="#a9bbd0" stroke-width="0.6"/><circle cx="831.9" cy="21.8" r="0.9" fill="none" stroke="#a9bbd0" stroke-width="0.5"/><circle cx="835" cy="21.8" r="0.9" fill="none" stroke="#a9bbd0" stroke-width="0.5"/>
<rect x="842.6" y="15.4" width="3.6" height="4.4" fill="none" stroke="#a9bbd0" stroke-width="0.6"/><rect x="844.8" y="17.8" width="3.6" height="4.4" fill="#94abc6" stroke="#a9bbd0" stroke-width="0.6"/>
<rect x="854" y="16" width="5" height="6.2" fill="#9db2cb" stroke="#a9bbd0" stroke-width="0.6"/><rect x="856.2" y="18" width="3.6" height="4.4" fill="#8fa6c2" stroke="#a9bbd0" stroke-width="0.6"/><rect x="855.4" y="15.2" width="2.2" height="1.2" fill="#a9bbd0"/>
<path d="M865.6 18.2C867.6 16.6 870.4 17.4 870.6 19.6C870.6 21.2 869.2 22 867.4 22" stroke="#a9bbd0" stroke-width="0.9" fill="none"/><path d="M864.6 16.6L865 19.6L867.8 18.4Z" fill="#a9bbd0"/>
<path d="M881.8 18.2C879.8 16.6 877 17.4 876.8 19.6C876.8 21.2 878.2 22 880 22" stroke="#a9bbd0" stroke-width="0.9" fill="none"/><path d="M882.8 16.6L882.4 19.6L879.6 18.4Z" fill="#a9bbd0"/>
<rect x="888" y="15" width="6.8" height="7.6" fill="#f4f4f4" stroke="#5a6a80" stroke-width="0.5"/><rect x="888" y="15" width="6.8" height="1.6" fill="#6a7f9c"/><rect x="889.4" y="18.4" width="5.6" height="2.8" fill="#fff" stroke="#44566e" stroke-width="0.5"/>
<circle cx="902.3" cy="18.9" r="3.5" fill="#f4f7fb" stroke="#1c3f6e" stroke-width="0.9"/>
<text x="902.3" y="21" font-size="5.6" font-weight="bold" text-anchor="middle" fill="#1c3f6e" font-family="Liberation Sans, sans-serif">?</text>
<circle cx="913.7" cy="18.9" r="3" fill="#8ea6c4" stroke="#5f7896" stroke-width="0.7"/>
<path d="M912.3 18.2H915.1L913.7 20.1Z" fill="#44597a"/>
<path d="M377.2 80L380.6 83.6M380.6 80L377.2 83.6" stroke="#8a8a8a" stroke-width="0.7" fill="none"/>
<path d="M2.8 95.6H6.5L4.65 99.5Z" fill="#000"/>
<path d="M3.9 249.79999999999998L7.2 251.7L3.9 253.6Z" fill="#000"/>
<path d="M3.9 263.0L7.2 264.9L3.9 266.79999999999995Z" fill="#000"/>
<path d="M3.9 275.90000000000003L7.2 277.8L3.9 279.7Z" fill="#000"/>
<path d="M228.1 156.5L229.7 158.20000000000002L231.29999999999998 156.5" stroke="#444" stroke-width="0.7" fill="none"/>
<path d="M392.29999999999995 572.9000000000001L393.9 574.6L395.5 572.9000000000001" stroke="#444" stroke-width="0.7" fill="none"/>
<defs><linearGradient id="jet" x1="0" y1="0" x2="0" y2="1">
<stop offset="0" stop-color="#800000"/><stop offset="0.125" stop-color="#ff0000"/><stop offset="0.375" stop-color="#ffff00"/>
<stop offset="0.625" stop-color="#00ffff"/><stop offset="0.875" stop-color="#0000ff"/><stop offset="1" stop-color="#000080"/></linearGradient></defs>
<rect x="829.4" y="139" width="10.1" height="357.2" fill="url(#jet)" stroke="#3a3a3a" stroke-width="0.5"/>
<path d="M837 151.40H839.4" stroke="#2a2a2a" stroke-width="0.5"/>
<path d="M837 184.89H839.4" stroke="#2a2a2a" stroke-width="0.5"/>
<path d="M837 218.38H839.4" stroke="#2a2a2a" stroke-width="0.5"/>
<path d="M837 251.87H839.4" stroke="#2a2a2a" stroke-width="0.5"/>
<path d="M837 285.36H839.4" stroke="#2a2a2a" stroke-width="0.5"/>
<path d="M837 318.85H839.4" stroke="#2a2a2a" stroke-width="0.5"/>
<path d="M837 352.34H839.4" stroke="#2a2a2a" stroke-width="0.5"/>
<path d="M837 385.83H839.4" stroke="#2a2a2a" stroke-width="0.5"/>
<path d="M837 419.32H839.4" stroke="#2a2a2a" stroke-width="0.5"/>
<path d="M837 452.81H839.4" stroke="#2a2a2a" stroke-width="0.5"/>
<path d="M837 486.30H839.4" stroke="#2a2a2a" stroke-width="0.5"/>
</svg>
</div>
</body></html>
